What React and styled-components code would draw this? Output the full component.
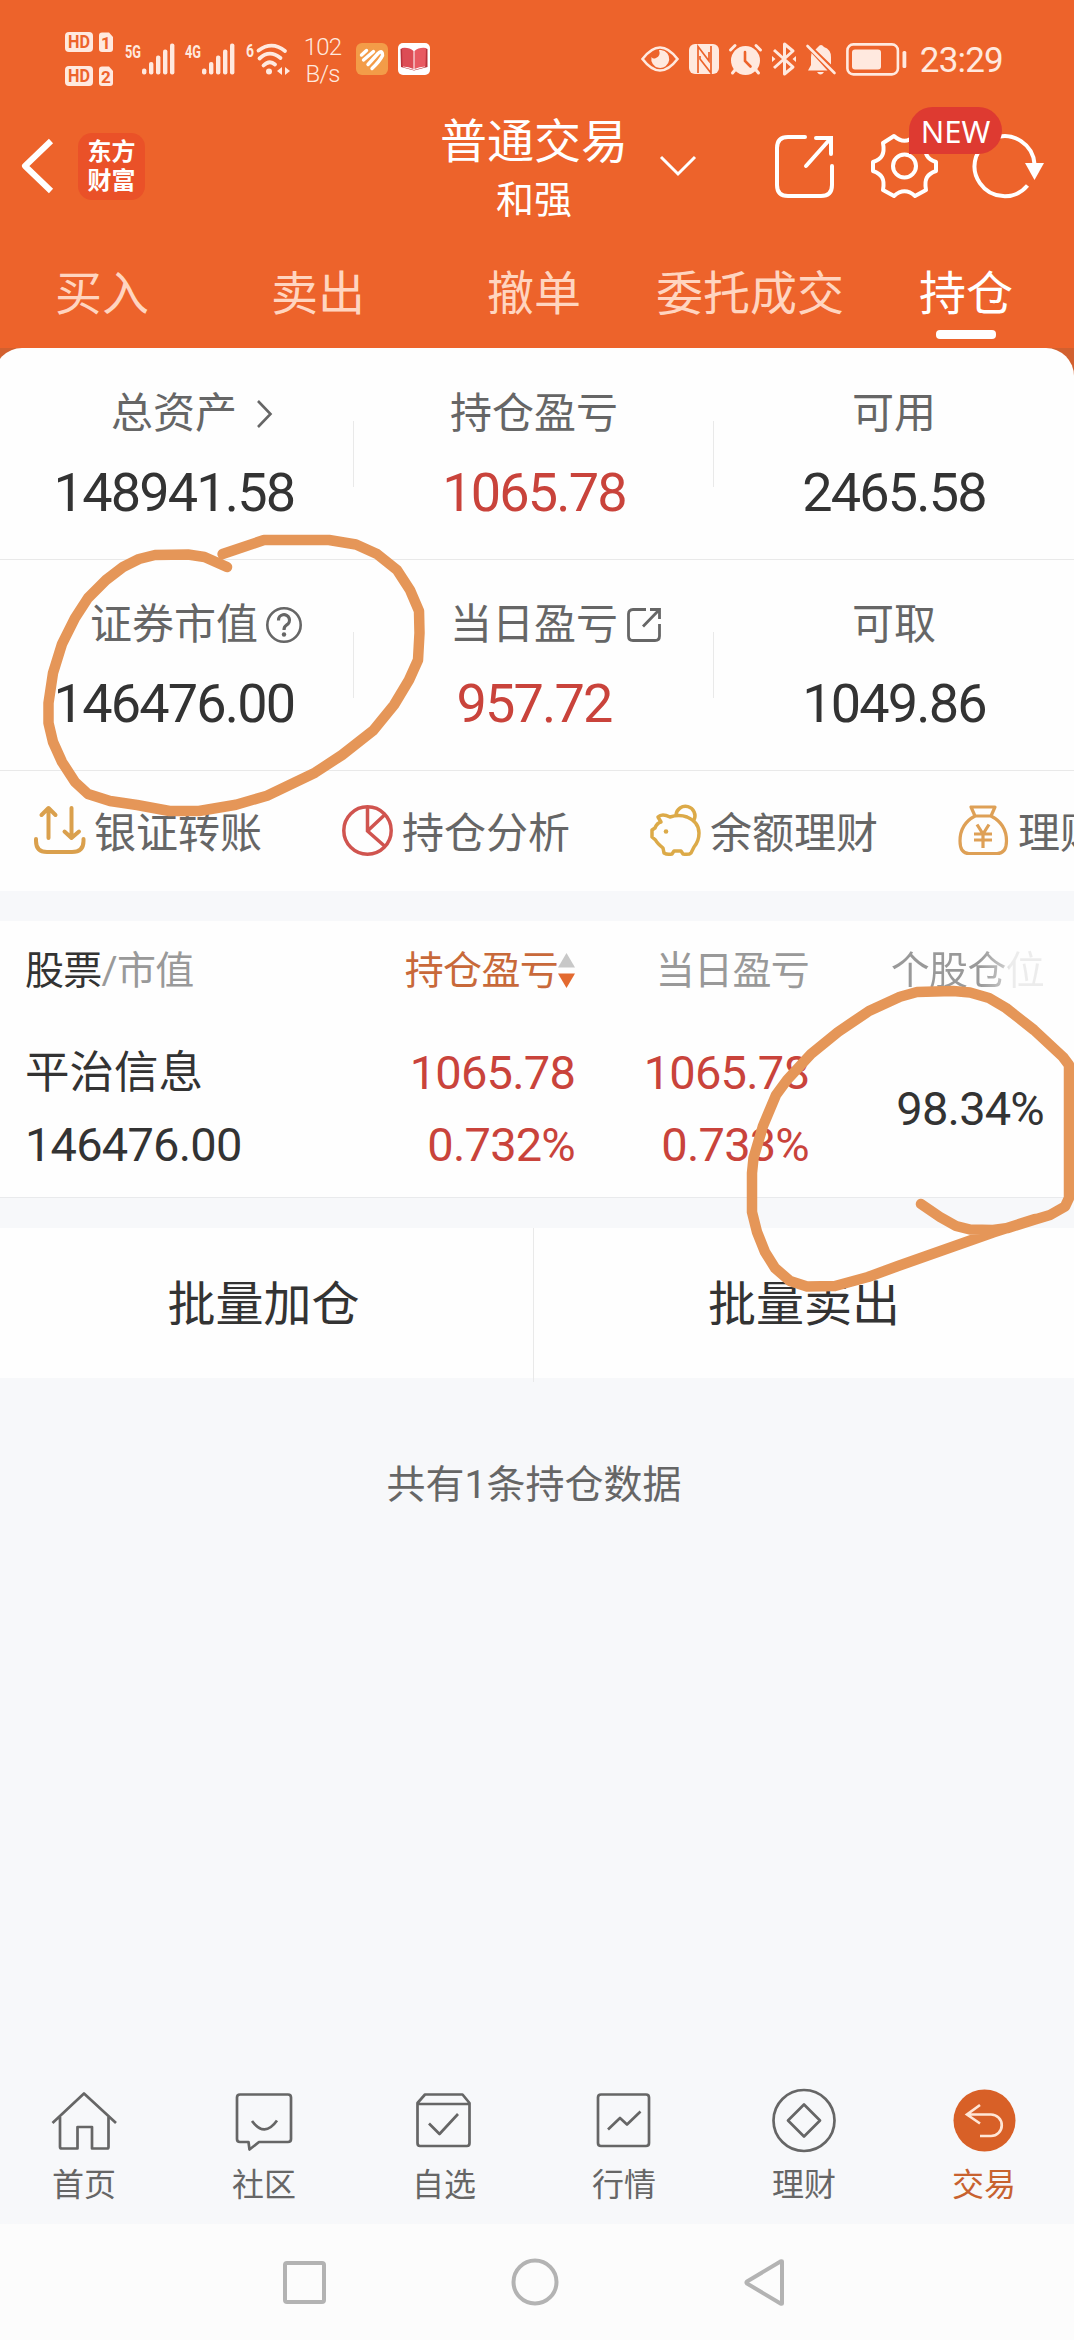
import React from 'react'
import styled, { createGlobalStyle } from 'styled-components'

const GlobalStyle = createGlobalStyle`
    * {
        box-sizing: border-box;
    }

    body {
        margin: 0;
        overflow: hidden;
        background: #f7f8fa;
        font-family: Roboto, "Noto Sans CJK SC", sans-serif;
        color: #333;
    }

    svg {
        display: block;
        flex: none;
        overflow: visible;
    }
`;

const Viewport = styled.div`
    width: 1074px;
    height: 2340px;
    overflow: hidden;
`;

/* the app is laid out on a 1080 grid, the edges bleed a little */
const Screen = styled.div`
    position: relative;
    display: flex;
    flex-direction: column;
    width: 1080px;
    height: 2340px;
    margin-left: -6px;
`;

const Header = styled.header`
    height: 348px;
    background: #ed632b;
    color: #fff;
`;

const StatusBar = styled.div`
    display: flex;
    align-items: center;
    justify-content: space-between;
    height: 108px;
    padding: 10px 71px 0 71px;
`;

const StatusGroup = styled.div`
    display: flex;
    align-items: center;
    gap: ${(p) => p.$gap}px;
    color: #ffe9df;
`;

const Speed = styled.div`
    width: 39px;
    margin: 4px 3px 0 4px;
    font-size: 24px;
    font-weight: 300;
    line-height: 27px;
    text-align: center;
    letter-spacing: -0.8px;
`;

const Clock = styled.div`
    margin: 3px 0 0 3px;
    font-size: 35px;
    line-height: 40px;
    letter-spacing: -0.8px;
`;

const TitleBar = styled.div`
    display: grid;
    grid-template-columns: 1fr auto 1fr;
    align-items: center;
    height: 116px;
`;

const TitleLeft = styled.div`
    display: flex;
    align-items: center;
    gap: 25px;
    padding-left: 27px;
`;

const Logo = styled.div`
    width: 67px;
    height: 67px;
    padding-top: 5px;
    border-radius: 14px;
    background: #ea5128;
    font-size: 24px;
    font-weight: 700;
    line-height: 29px;
    text-align: center;
`;

const Titles = styled.div`
    margin: 5px 0 -5px;
    text-align: center;
    line-height: 58px;
`;

const Title = styled.div`
    font-size: 47px;
`;

const Account = styled.div`
    font-size: 38px;
`;

const TitleRight = styled.div`
    display: flex;
    align-items: center;
    padding-left: 32px;
`;

const Tool = styled.div`
    position: relative;
    margin-left: ${(p) => p.$left}px;
`;

const NewBadge = styled.span`
    position: absolute;
    left: 38px;
    top: -27px;
    width: 93px;
    height: 47px;
    border-radius: 24px 24px 24px 0;
    background: #de3a31;
    font-family: "Noto Sans", sans-serif;
    font-size: 31px;
    line-height: 49px;
    text-align: center;
    z-index: 1;
`;

const Tabs = styled.nav`
    display: grid;
    grid-template-columns: repeat(5, 1fr);
    height: 124px;
    padding-top: 40px;
`;

const Tab = styled.div`
    display: flex;
    flex-direction: column;
    align-items: center;
    gap: 6px;
    font-size: 47px;
    line-height: 60px;
    color: ${(p) => (p.$active ? '#fff' : '#ffd5c0')};

    &::after {
        content: '';
        width: 60px;
        height: 9px;
        border-radius: 4px;
        background: ${(p) => (p.$active ? '#fff' : 'transparent')};
    }
`;

const CardBack = styled.div`
    background: #d2602f;
`;

const Card = styled.section`
    border-radius: ${(p) => (p.$rounded ? '28px 28px 0 0' : '0')};
    background: #fefefe;
`;

const Summary = styled.div`
    display: grid;
    grid-template-columns: repeat(3, 1fr);
    height: ${(p) => p.$height}px;
    border-bottom: 1px solid #e9e9e9;
`;

const Cell = styled.div`
    display: flex;
    flex-direction: column;
    align-items: center;
    padding-top: ${(p) => p.$top}px;
    background: linear-gradient(#e9e9e9, #e9e9e9) no-repeat right ${(p) => p.$top + 32}px / 1px 66px;

    &:last-child {
        background: none;
    }
`;

const Label = styled.div`
    display: flex;
    align-items: center;
    height: 50px;
    font-size: 42px;
    line-height: 50px;
    color: #666;
    white-space: nowrap;
`;

/* takes no room, so that the label stays centred over its value */
const LabelIcon = styled.span`
    width: 0;
    padding-left: ${(p) => p.$gap}px;
    margin-right: -${(p) => p.$gap}px;
`;

const Value = styled.div`
    margin-top: 24px;
    font-size: 54px;
    line-height: 60px;
    letter-spacing: -1.8px;
    color: ${(p) => (p.$up ? '#c9433b' : '#333')};
`;

const Shortcuts = styled.div`
    display: flex;
    height: 120px;
    padding-left: 40px;
    overflow: hidden;
`;

const Shortcut = styled.div`
    display: flex;
    flex: none;
    gap: 9px;
    width: 308px;
    padding-top: 34px;
    font-size: 42px;
    line-height: 57px;
    color: #666;
    white-space: nowrap;
`;

const Gap = styled.div`
    height: ${(p) => p.$h}px;
    border-top: ${(p) => (p.$line ? '1px solid #e9eaec' : 'none')};
    background: #f7f8fa;
`;

const Row = styled.div`
    display: grid;
    grid-template-columns: 318px 232px 234px 1fr;
    padding: 2px 30px 0 31px;
    align-items: center;
    height: ${(p) => p.$h}px;
`;

const HeadCell = styled.div`
    display: flex;
    align-items: center;
    justify-content: ${(p) => (p.$left ? 'flex-start' : 'flex-end')};
    font-size: 39px;
    line-height: 50px;
    letter-spacing: -0.7px;
    color: ${(p) => p.$color || '#999'};
    white-space: nowrap;

    b {
        font-weight: 400;
        color: #333;
    }
`;

const Faded = styled.span`
    background: linear-gradient(to right, #999 0 58%, #c4c4c4 73%, #ececec 78%);
    background-clip: text;
    color: transparent;
`;

const DataCell = styled.div`
    display: flex;
    flex-direction: column;
    gap: 14px;
    text-align: ${(p) => (p.$left ? 'left' : 'right')};
    font-size: 47px;
    line-height: 58px;
    letter-spacing: -0.8px;
    white-space: nowrap;
    color: ${(p) => (p.$up ? '#c9433b' : '#333')};
`;

const StockName = styled.div`
    font-size: 44.5px;
    letter-spacing: 0;
`;

const Batch = styled.div`
    display: grid;
    grid-template-columns: 1fr 1fr;
    height: 150px;
    background: #fefefe;
`;

const BatchButton = styled.div`
    border-right: 1px solid #e9e9e9;
    font-size: 48px;
    line-height: 154px;
    text-align: center;

    &:last-child {
        border: 0;
    }
`;

const Total = styled.div`
    flex: 1;
    padding-top: 82px;
    font-size: 39px;
    line-height: 50px;
    text-align: center;
    color: #666;
`;

const BottomBar = styled.nav`
    display: grid;
    grid-template-columns: repeat(6, 1fr);
    height: 151px;
    padding-top: 16px;
    background: #f7f8fa;
`;

const BottomItem = styled.div`
    display: flex;
    flex-direction: column;
    align-items: center;
    gap: 10px;
    font-size: 32px;
    line-height: 44px;
    color: ${(p) => (p.$active ? '#c8622f' : '#666')};
`;

const SystemNav = styled.div`
    display: flex;
    align-items: center;
    justify-content: center;
    gap: 185px;
    height: 116px;
    background: #fcfcfc;
`;

const Ink = styled.svg`
    position: absolute;
    left: 6px;
    top: 0;
    pointer-events: none;
`;

const HdIcon = () => (
    <svg width="48" height="54" viewBox="0 0 48 54">
        {[1, 2].map((n, i) => (
            <g key={n} transform={`translate(0 ${i * 34})`}>
                <rect width="28" height="20" rx="4" fill="#ffe9df" />
                <text x="14" y="16.2" fontSize="18" fontWeight="700" textAnchor="middle" textLength="22" lengthAdjust="spacingAndGlyphs" fill="#ed632b">HD</text>
                <path d="M37 0.5H44L48 5V17Q48 20 45 20H37Q34 20 34 17V3.5Q34 0.5 37 0.5Z" fill="#ffe9df" />
                <text x="41" y="16.5" fontSize="17" fontWeight="700" textAnchor="middle" fill="#ed632b">{n}</text>
            </g>
        ))}
    </svg>
)

const Signal = ({ type }) => (
    <svg width="50" height="32" viewBox="0 0 50 32">
        <text x="1" y="14.5" fontSize="19" fontWeight="700" textLength="16" lengthAdjust="spacingAndGlyphs" fill="currentColor">{type}</text>
        {[6, 12.5, 19, 25, 31].map((h, i) => (
            <rect key={h} x={18 + i * 7} y={31.5 - h} width="4.4" height={h} rx="2" fill="currentColor" />
        ))}
    </svg>
)

const WifiIcon = () => (
    <svg width="44" height="33" viewBox="0 0 44 33" fill="none" stroke="currentColor" strokeWidth="3.800" strokeLinecap="round">
        <text x="1" y="13.5" fontSize="18" fontWeight="700" textLength="8" lengthAdjust="spacingAndGlyphs" fill="currentColor" stroke="none">6</text>
        <path d="M13.500 7.500Q27 -2.500 40 8M14.500 15.500Q24.500 6 35.500 15M18.500 22.500Q24.500 16.500 30 21.500" />
        <circle cx="24" cy="28.500" r="3" fill="currentColor" stroke="none" />
        <path d="M37 24V32L32 28ZM40 24V32L45 28Z" fill="currentColor" stroke="none" />
    </svg>
)

const HealthApp = () => (
    <svg width="32" height="32" viewBox="0 0 32 32">
        <rect width="32" height="32" rx="6" fill="#f39c48" />
        <g fill="none" stroke="#fff" strokeWidth="3.4" strokeLinecap="round">
            <path d="M5.500 12L10.500 7.500" />
            <path d="M7.500 17L17.500 8.500" />
            <path d="M12 21.500L22 10.500Q26.500 6 26.500 12.500Q24 18 16 25.500" />
        </g>
    </svg>
)

const BookApp = () => (
    <svg width="32" height="32" viewBox="0 0 32 32">
        <rect width="32" height="32" rx="5" fill="#fff" />
        <path d="M2.500 6L5 5V24L16 27L27 24V5L29.500 6V24L16 27.500L3 24Z" fill="#b8323b" />
        <path d="M4 5Q11 4 15.500 8V26Q11 23.500 4.500 23.500Z" fill="#dc4c55" />
        <path d="M28 5Q21 4 16.500 8V26Q21 23.500 27.500 23.500Z" fill="#e85a62" />
    </svg>
)

const EyeIcon = () => (
    <svg width="38" height="26" viewBox="0 0 38 26">
        <path d="M1.500 13Q19 -10 36.500 13Q19 36 1.500 13Z" fill="none" stroke="currentColor" strokeWidth="2.600" />
        <path d="M20 4A9 9 0 1 1 10.500 11Q12 13.500 15 12Q20 10 18 4Z" fill="currentColor" />
    </svg>
)

const NfcIcon = () => (
    <svg width="30" height="30" viewBox="0 0 30 30">
        <rect width="30" height="30" rx="6" fill="currentColor" />
        <path d="M9 29V2.500L20 17V8M11 12V15L22 29V2" fill="none" stroke="#ed632b" strokeWidth="1.700" />
    </svg>
)

const AlarmIcon = () => (
    <svg width="33" height="31" viewBox="0 0 33 31" fill="none" stroke="currentColor" strokeWidth="3" strokeLinecap="round">
        <circle cx="16.500" cy="16.500" r="14.500" fill="currentColor" stroke="none" />
        <path d="M1.500 6L6 1.500M31.500 6L27 1.500M6 26L3.500 29M27 26L29.500 29" />
        <path d="M16 8V17L21.500 22.500" stroke="#ed632b" strokeWidth="2.600" />
    </svg>
)

const BluetoothIcon = () => (
    <svg width="24" height="34" viewBox="0 0 24 34" fill="none" stroke="currentColor" strokeWidth="3" strokeLinejoin="round">
        <path d="M2 8L21 25L12.500 32V2L21 9L2 26" />
        <path d="M0 14V20L3.500 17ZM24 14V20L20.500 17Z" fill="currentColor" stroke="none" />
    </svg>
)

const MutedIcon = () => (
    <svg width="30" height="32" viewBox="0 0 30 32">
        <path d="M2 27.500L5 22V14L5.500 10L21.500 27.500Z M9.500 6.500L12 4Q15 0 18 4Q25 6.500 25 14V21.500Z M11 29H18Q14.500 34 11 29Z" fill="currentColor" />
        <path d="M1.500 3L28.500 30" stroke="currentColor" strokeWidth="2.600" strokeLinecap="round" />
    </svg>
)

const BatteryIcon = () => (
    <svg width="61" height="33" viewBox="0 0 61 33">
        <rect x="1.400" y="1.400" width="50.500" height="30" rx="6" fill="none" stroke="currentColor" strokeWidth="2.600" />
        <rect x="6" y="6.500" width="29" height="20" rx="3" fill="currentColor" />
        <rect x="56.500" y="8" width="3.800" height="17" rx="1.500" fill="currentColor" />
    </svg>
)

const BackIcon = () => (
    <svg width="32" height="54" viewBox="0 0 32 54" fill="none" stroke="#fff" strokeWidth="6">
        <path d="M30 2L4 27L30 52" strokeLinejoin="round" />
    </svg>
)

const ChevronDown = () => (
    <svg width="36" height="20" viewBox="0 0 36 20" fill="none" stroke="#fff" strokeWidth="3">
        <path d="M1 1L18 18L35 1" />
    </svg>
)

const ShareIcon = () => (
    <svg width="59" height="63" viewBox="0 0 59 63" fill="none" stroke="#fff" strokeWidth="4" strokeLinecap="round">
        <path d="M30 2H13Q2 2 2 13V50Q2 61 13 61H46Q57 61 57 50V31" />
        <path d="M41 3H56V19M56 3L31 31" />
    </svg>
)

const GearIcon = () => (
    <svg width="67" height="64" viewBox="0 0 67 64" fill="none" stroke="#fff" strokeWidth="4" strokeLinejoin="round">
        <path d="M23 2Q33.500 11.500 44 2L55 9C53 20 56 25 65 28V37C56 40 53 45 55 56L44 62Q33.500 52.500 23 62L12 56C14 45 11 40 2 37V28C11 25 14 20 12 9Z" />
        <circle cx="33.500" cy="32" r="11.500" />
    </svg>
)

const RefreshIcon = () => (
    <svg width="71" height="64" viewBox="0 0 71 64" fill="none" stroke="#fff" strokeWidth="4">
        <path d="M54.500 51.500A30 30 0 1 1 61.500 30" />
        <path d="M52 29H71L61.500 46Z" fill="#fff" stroke="none" />
    </svg>
)

const ArrowRight = () => (
    <svg width="15" height="28" viewBox="0 0 15 28" fill="none" stroke="#666" strokeWidth="2.600">
        <path d="M1 1L13.500 14L1 27" />
    </svg>
)

const HelpIcon = () => (
    <svg width="36" height="36" viewBox="0 0 36 36" fill="none" stroke="#666" strokeWidth="2.600">
        <circle cx="18" cy="18" r="16.700" />
        <path d="M12.500 13.500A5.500 5.500 0 1 1 20.500 18Q18 19.500 18 23" strokeWidth="3.200" />
        <circle cx="18" cy="27.500" r="2.200" fill="#666" stroke="none" />
    </svg>
)

const OpenIcon = () => (
    <svg width="34" height="34" viewBox="0 0 34 34" fill="none" stroke="#666" strokeWidth="2.800">
        <path d="M19 1.500H6Q1.500 1.500 1.500 6V28Q1.500 32.500 6 32.500H28Q32.500 32.500 32.500 28V16" />
        <path d="M23 1.500H32.500V11M32 2L16 18.500" />
    </svg>
)

const TransferIcon = () => (
    <svg width="51" height="51" viewBox="0 0 51 51" fill="none" stroke="#daa04d" strokeWidth="4" strokeLinecap="round" strokeLinejoin="round">
        <path d="M14.500 33V3M7.500 10L14.500 3L21.500 10" />
        <path d="M37.500 3V33M30.500 26.500L37.500 33L45 26.500" />
        <path d="M2 34V36Q2 47 13 47H38Q49.500 47 49.500 36V34" />
    </svg>
)

const PieIcon = () => (
    <svg width="51" height="51" viewBox="0 0 51 51" fill="none" stroke="#d0544f" strokeWidth="3.500">
        <circle cx="25.500" cy="25.500" r="23.700" />
        <path d="M25.500 2V26L42.500 41M25.500 26L43 9.500" />
    </svg>
)

const PiggyIcon = () => (
    <svg width="51" height="51" viewBox="0 0 51 51" fill="none" stroke="#dcaa48" strokeWidth="3.500" strokeLinejoin="round">
        <path d="M8 12Q12 8 20 12Q29 9 37 12Q49 17 49 28Q49 36 44 42L41 48Q39 50 33 49L31 46H24L22 49Q17 50 14 48L13 43Q7 38 5.500 35L2 32V25L5 23Q7 18 11 17Z" />
        <path d="M26 10A9.500 9.500 0 1 1 44 15" />
        <circle cx="16" cy="26.500" r="2.300" fill="#dcaa48" stroke="none" />
    </svg>
)

const MoneyBagIcon = () => (
    <svg width="51" height="51" viewBox="0 0 51 51" fill="none" stroke="#dea056" strokeWidth="3.200" strokeLinejoin="round">
        <path d="M13 2H37L33 11H17Z" />
        <path d="M17 11Q2 19 2 36Q2 48.500 11 48.500H39Q48.500 48.500 48.500 36Q48.500 19 33 11" />
        <path d="M19 19.500L25 29L31 19.500M25 29V43M16 29H34M16 35H34" />
    </svg>
)

const SortIcon = () => (
    <svg width="17" height="36" viewBox="0 0 17 36">
        <path d="M8.500 0L17 14.500H0Z" fill="#c8c8c8" />
        <path d="M0 20.500H17L8.500 35Z" fill="#e36a30" />
    </svg>
)

const BottomIcon = ({ children }) => (
    <svg width="66" height="64" viewBox="0 0 66 64" fill="none" stroke="#666" strokeWidth="2.700" strokeLinejoin="round">
        {children}
    </svg>
)

const tabs = ['买入', '卖出', '撤单', '委托成交', '持仓']

const summary = [
    [
        { label: '总资产', value: '148941.58', icon: <ArrowRight />, gap: 20 },
        { label: '持仓盈亏', value: '1065.78', up: true },
        { label: '可用', value: '2465.58' },
    ],
    [
        { label: '证券市值', value: '146476.00', icon: <HelpIcon />, gap: 8 },
        { label: '当日盈亏', value: '957.72', up: true, icon: <OpenIcon />, gap: 9 },
        { label: '可取', value: '1049.86' },
    ],
]

const shortcuts = [
    { label: '银证转账', icon: <TransferIcon /> },
    { label: '持仓分析', icon: <PieIcon /> },
    { label: '余额理财', icon: <PiggyIcon /> },
    { label: '理财', icon: <MoneyBagIcon /> },
]

const bottomItems = [
    { label: '首页', icon: <path d="M1.500 34L33 4.500L65 34M9 28V58Q9 59.500 11 59.500H26.500V38H41V59.500H56Q57.500 59.500 57.500 58V28" /> },
    { label: '社区', icon: <path d="M9 5.500H57Q60 5.500 60 8.500V50Q60 53 57 53H28L18.500 60.500L17.500 53H9Q6 53 6 50V8.500Q6 5.500 9 5.500ZM21 32Q33.500 49 46 31.500" /> },
    { label: '自选', icon: <path d="M6.500 15H58.500V54Q58.500 57 56 57H9Q6.500 57 6.500 54V14L14 5.500H51.500L58.500 14V15M18 34.500L28.500 45L47 25" /> },
    { label: '行情', icon: <path d="M10 5.500H55Q58 5.500 58 8.500V54Q58 57 55 57H10Q7 57 7 54V8.500Q7 5.500 10 5.500ZM17 40.500L29 29L36 35.500L49.500 22.500" /> },
    { label: '理财', icon: <path d="M2.500 31.500A30.500 30.500 0 1 0 63.500 31.500A30.500 30.500 0 1 0 2.500 31.500ZM17 31.500L33 15.500L49 31.500L33 47.500Z" /> },
    {
        label: '交易',
        active: true,
        icon: (
            <>
                <circle cx="33.500" cy="31.500" r="31" fill="#d86027" stroke="none" />
                <path d="M29 16L16 25.500L29 34.500M16 25.500H40A10.700 10.700 0 0 1 40 47H29" stroke="#ffe6d6" strokeLinejoin="miter" />
            </>
        ),
    },
]

const inkLeft = '227,567 204.5,557 188,554.5 155,555 139,559 123,567 106,580 88,598 75,618 62,644 53,673 48.500,703 48.500,723 53,742 62,762 75,782 88,794 110,801 137,805 169.500,811 199,811 236,804.700 267,795.700 315,772.700 342,755 373,730.700 394,705 409,680 418,660 419.500,633 419,611 410,590 397,570 377,554 356,544.500 329,540 264,540 222.600,554'
const inkRight = '921,1204 940,1217 956,1226 970,1229.500 993,1230 1008,1228 1035,1219.500 1050,1215 1065,1206.500 1069,1198 1069,1065 1063,1057 1034,1030 1006,1008 989,998 970,992.500 953,991 917,992 900,996.700 869,1011 838,1032 811,1054 787,1080 776,1095 763,1126 753.500,1158 752,1173 752,1212 757,1232 765,1252 775,1268 790,1281 807,1286.500 835,1286 868,1277 898,1266 993,1232.500 1035,1219'

const App = () => {
    return (
        <Viewport>
            <GlobalStyle />
            <Screen>
                <Header>
                    <StatusBar>
                        <StatusGroup $gap={10.5}>
                            <HdIcon />
                            <Signal type="5G" />
                            <Signal type="4G" />
                            <WifiIcon />
                            <Speed>102 B/s</Speed>
                            <HealthApp />
                            <BookApp />
                        </StatusGroup>
                        <StatusGroup $gap={10}>
                            <EyeIcon />
                            <NfcIcon />
                            <AlarmIcon />
                            <BluetoothIcon />
                            <MutedIcon />
                            <BatteryIcon />
                            <Clock>23:29</Clock>
                        </StatusGroup>
                    </StatusBar>

                    <TitleBar>
                        <TitleLeft>
                            <BackIcon />
                            <Logo>东方<br />财富</Logo>
                        </TitleLeft>
                        <Titles>
                            <Title>普通交易</Title>
                            <Account>和强</Account>
                        </Titles>
                        <TitleRight>
                            <ChevronDown />
                            <Tool $left={79}><ShareIcon /></Tool>
                            <Tool $left={37}>
                                <GearIcon />
                                <NewBadge>NEW</NewBadge>
                            </Tool>
                            <Tool $left={35}><RefreshIcon /></Tool>
                        </TitleRight>
                    </TitleBar>

                    <Tabs>
                        {tabs.map((name) => (
                            <Tab key={name} $active={name === '持仓'}>{name}</Tab>
                        ))}
                    </Tabs>
                </Header>

                <CardBack>
                    <Card $rounded>
                        {summary.map((cells, i) => (
                            <Summary key={i} $height={i === 0 ? 212 : 211}>
                                {cells.map((c) => (
                                    <Cell key={c.label} $top={i === 0 ? 41 : 40}>
                                        <Label>
                                            {c.label}
                                            {c.icon && <LabelIcon $gap={c.gap}>{c.icon}</LabelIcon>}
                                        </Label>
                                        <Value $up={c.up}>{c.value}</Value>
                                    </Cell>
                                ))}
                            </Summary>
                        ))}
                        <Shortcuts>
                            {shortcuts.map((s) => (
                                <Shortcut key={s.label}>
                                    {s.icon}
                                    {s.label}
                                </Shortcut>
                            ))}
                        </Shortcuts>
                    </Card>
                </CardBack>

                <Gap $h={30} />

                <Card>
                    <Row $h={98}>
                        <HeadCell $left><b>股票</b>/市值</HeadCell>
                        <HeadCell $color="#c8693a">持仓盈亏<SortIcon /></HeadCell>
                        <HeadCell>当日盈亏</HeadCell>
                        <HeadCell><Faded>个股仓位</Faded></HeadCell>
                    </Row>
                    <Row $h={178}>
                        <DataCell $left>
                            <StockName>平治信息</StockName>
                            <div>146476.00</div>
                        </DataCell>
                        <DataCell $up>
                            <div>1065.78</div>
                            <div>0.732%</div>
                        </DataCell>
                        <DataCell $up>
                            <div>1065.78</div>
                            <div>0.733%</div>
                        </DataCell>
                        <DataCell>98.34%</DataCell>
                    </Row>
                </Card>

                <Gap $h={31} $line />

                <Batch>
                    <BatchButton>批量加仓</BatchButton>
                    <BatchButton>批量卖出</BatchButton>
                </Batch>

                <Total>共有1条持仓数据</Total>

                <BottomBar>
                    {bottomItems.map((item) => (
                        <BottomItem key={item.label} $active={item.active}>
                            <BottomIcon>{item.icon}</BottomIcon>
                            {item.label}
                        </BottomItem>
                    ))}
                </BottomBar>

                <SystemNav>
                    <svg width="43" height="43" viewBox="0 0 43 43" fill="none" stroke="#b3b3b3" strokeWidth="4">
                        <rect x="2" y="2" width="39" height="39" rx="2" />
                    </svg>
                    <svg width="48" height="48" viewBox="0 0 48 48" fill="none" stroke="#b3b3b3" strokeWidth="4">
                        <circle cx="24" cy="24" r="21.500" />
                    </svg>
                    <svg width="41" height="47" viewBox="0 0 41 47" fill="none" stroke="#b3b3b3" strokeWidth="4" strokeLinejoin="round">
                        <path d="M38 2.500V44.500Q38 45 36.500 44.500L3 24.500Q2 23.500 3 22.500L36.500 2.500Q38 2 38 2.500Z" />
                    </svg>
                </SystemNav>

                {/* marker strokes over the page */}
                <Ink width="1074" height="2340" viewBox="0 0 1074 2340" fill="none" stroke="#e59658" strokeWidth="10.500" strokeLinecap="round" strokeLinejoin="round">
                    <polyline points={inkLeft} />
                    <polyline points={inkRight} />
                </Ink>
            </Screen>
        </Viewport>
    )
}

export default App
